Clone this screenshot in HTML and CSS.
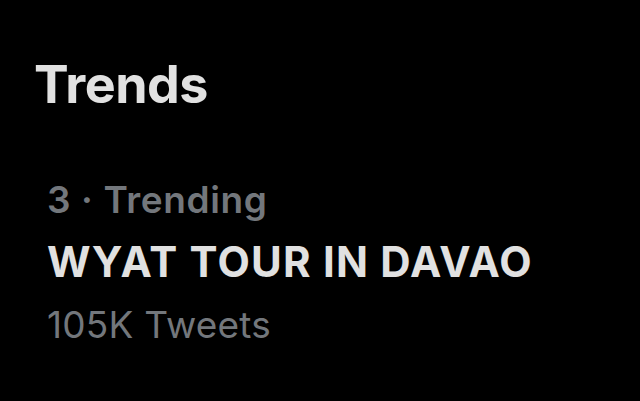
FILE: index.html
```html
<!DOCTYPE html>
<html lang="en">
<head>
  <meta charset="utf-8">
  <title>Trends</title>
  <link rel="stylesheet" href="styles.css">
</head>
<body>
  <section class="trends">
    <h2 class="trends__title">Trends</h2>
    <div class="trend">
      <div class="trend__meta">3 · Trending</div>
      <div class="trend__name">WYAT TOUR IN DAVAO</div>
      <div class="trend__count">105K Tweets</div>
    </div>
  </section>
</body>
</html>
```

FILE: styles.css
```css
*, *::before, *::after {
  margin: 0;
  padding: 0;
  box-sizing: border-box;
}

html, body {
  height: 100%;
}

body {
  background: #000000;
  font-family: "Inter", "Roboto", sans-serif;
  color: #e1e1e1;
}

.trends {
  padding: 54px 0 0 34px;
}

.trends__title {
  font-size: 52px;
  font-weight: 700;
  line-height: 62px;
  letter-spacing: -0.5px;
}

.trend {
  display: flex;
  flex-direction: column;
  gap: 10px;
  padding: 62px 0 0 13px;
}

.trend__meta {
  font-size: 37px;
  font-weight: 600;
  line-height: 44px;
  letter-spacing: 0.6px;
  color: #73777c;
}

.trend__name {
  font-size: 42px;
  font-weight: 700;
  line-height: 60px;
  letter-spacing: 1.2px;
}

.trend__count {
  font-size: 37px;
  font-weight: 400;
  line-height: 46px;
  letter-spacing: 0.2px;
  color: #73777c;
}
```
